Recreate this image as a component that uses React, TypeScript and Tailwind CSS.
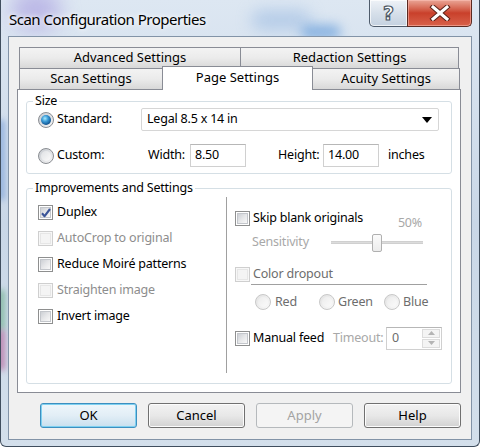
import React from "react";

function CheckBox({ checked = false, disabled = false }: { checked?: boolean; disabled?: boolean }) {
  return (
    <span
      className={`relative inline-flex w-[15px] h-[15px] shrink-0 border p-[1px] ${
        disabled ? "border-[#cfcfcf] bg-[#f7f7f7]" : "border-[#8e8f8f] bg-white"
      }`}
    >
      <span
        className={`block w-full h-full border ${
          disabled
            ? "border-[#e6e6e6] bg-[#f4f4f4]"
            : "border-[#c3c6cb] bg-gradient-to-br from-[#cdd0d5] via-[#e6e7e9] to-[#f8f8f8]"
        }`}
      />
      {checked && (
        <svg className="absolute left-[1px] top-[1px]" width="12" height="12" viewBox="0 0 12 12">
          <path d="M2 6.2 L4.6 9.2 L10 2" fill="none" stroke="#3b5598" strokeWidth="2.1" strokeLinejoin="round" />
        </svg>
      )}
    </span>
  );
}

function Radio({ checked = false, disabled = false }: { checked?: boolean; disabled?: boolean }) {
  return (
    <span
      className={`inline-flex w-[16px] h-[16px] shrink-0 rounded-full border items-center justify-center ${
        disabled
          ? "border-[#c8c8c8] bg-gradient-to-br from-[#e2e2e2] to-[#fafafa]"
          : "border-[#8a8d92] bg-gradient-to-br from-[#c6cad0] to-[#f6f6f6]"
      }`}
    >
      {checked ? (
        <span className="block w-[10px] h-[10px] rounded-full bg-[radial-gradient(circle_at_40%_35%,#a9ecff_0%,#3a9ad6_35%,#0e4f8c_75%,#0a3561_100%)]" />
      ) : (
        <span
          className={`block w-[10px] h-[10px] rounded-full ${
            disabled ? "bg-gradient-to-br from-[#ececec] to-[#fbfbfb]" : "bg-gradient-to-br from-[#dfe1e4] to-[#fbfbfb]"
          }`}
        />
      )}
    </span>
  );
}

function Tab({ label, w, selected = false, first = false }: { label: string; w: string; selected?: boolean; first?: boolean }) {
  if (selected) {
    return (
      <div
        className={`${w} h-[24px] -ml-px relative z-10 flex items-center justify-center border border-b-0 border-[#898c95] bg-white text-[13px] tracking-normal text-black pb-[1px]`}
      >
        {label}
      </div>
    );
  }
  return (
    <div
      className={`${w} h-[22px] ${first ? "" : "-ml-px"} flex items-center justify-center border border-[#898c95] bg-gradient-to-b from-[#f3f3f3] via-[#ebebeb] to-[#d8d8d8] text-[13px] tracking-normal text-black`}
    >
      {label}
    </div>
  );
}

function Button({ label, focused = false, disabled = false }: { label: string; focused?: boolean; disabled?: boolean }) {
  const cls = disabled
    ? "border-[#b5b9bc] bg-[#f4f4f4] text-[#a3a3a3]"
    : focused
    ? "border-[#3c8fc0] bg-gradient-to-b from-[#eef6fb] via-[#e2eef6] to-[#c8dfee] text-black shadow-[inset_0_0_0_1px_#7ed0f0]"
    : "border-[#707070] bg-gradient-to-b from-[#f2f2f2] via-[#e8e8e8] to-[#d2d2d2] text-black shadow-[inset_0_0_0_1px_#fcfcfc]";
  return (
    <div className={`w-[97px] h-[25px] rounded-[3px] border flex items-center justify-center text-[13px] tracking-normal ${cls}`}>
      {label}
    </div>
  );
}

export default function App() {
  return (
    <div className="w-[480px] h-[447px] relative overflow-hidden rounded-b-[6px] border-x border-b border-[#404e5e] bg-gradient-to-b from-[#dde7f2] via-[#c9d7e7] to-[#d3dfeb] flex flex-col font-['Noto_Sans',sans-serif] text-[12.5px] tracking-[-0.2px] text-black">
      {/* blurred desktop behind the glass */}
      <div className="absolute left-[10px] top-[-10px] w-[50px] h-[40px] rounded-full bg-[#a79be0] opacity-60 blur-[10px]" />
      <div className="absolute left-[250px] top-[10px] w-[60px] h-[20px] rounded-full bg-[#8fb3df] opacity-50 blur-[8px]" />
      <div className="absolute left-[300px] top-[25px] w-[40px] h-[14px] rounded-full bg-[#4f8fd6] opacity-60 blur-[6px]" />
      <div className="absolute left-[-4px] top-[120px] w-[8px] h-[80px] bg-[#7aa0d8] opacity-70 blur-[3px]" />
      <div className="absolute left-[-4px] top-[290px] w-[8px] h-[40px] bg-[#5aa57a] opacity-60 blur-[3px]" />
      <div className="absolute left-[-4px] top-[330px] w-[8px] h-[40px] bg-[#b04a8a] opacity-60 blur-[3px]" />

      {/* title bar */}
      <div className="relative h-[36px] flex items-start shrink-0">
        <div className="pl-[8px] pt-[9px] text-[15px] tracking-[-0.5px] leading-[20px] text-black [text-shadow:0_0_8px_#ffffff,0_0_4px_#ffffff]">
          Scan Configuration Properties
        </div>
        <div className="ml-auto mr-[7px] flex">
          <div className="w-[39px] h-[27px] rounded-bl-[5px] border border-t-0 border-[#4e5b6b] bg-gradient-to-b from-[#eef2f7] via-[#d7e0ea] to-[#c4d1e0] shadow-[inset_0_0_0_1px_rgba(255,255,255,0.7)] flex items-center justify-center">
            <span className="text-[19px] font-bold leading-none text-white [-webkit-text-stroke:1.2px_#4b5663] font-['DejaVu_Sans',sans-serif]">?</span>
          </div>
          <div className="w-[65px] h-[27px] -ml-px rounded-br-[5px] border border-t-0 border-[#5b2a22] bg-gradient-to-b from-[#e9a596] via-[#c9402b] to-[#d8614a] shadow-[inset_0_0_0_1px_rgba(255,200,190,0.5)] flex items-center justify-center">
            <svg width="22" height="16" viewBox="0 0 22 16">
              <path d="M4 2 L18 14 M18 2 L4 14" stroke="#5a2219" strokeWidth="5" strokeLinecap="square" />
              <path d="M4 2 L18 14 M18 2 L4 14" stroke="#ffffff" strokeWidth="3" strokeLinecap="square" />
            </svg>
          </div>
        </div>
      </div>

      {/* client area */}
      <div className="relative mx-[7px] h-[404px] border border-[#8293a7] bg-[#f0f0f0] flex flex-col">
        {/* tabs */}
        <div className="pt-[10px] pl-[10px] flex flex-col">
          <div className="flex">
            <Tab label="Advanced Settings" w="w-[222px]" first />
            <Tab label="Redaction Settings" w="w-[219px]" />
          </div>
          <div className="flex items-end h-[22px] -mt-px">
            <Tab label="Scan Settings" w="w-[144px]" first />
            <Tab label="Page Settings" w="w-[151px]" selected />
            <Tab label="Acuity Settings" w="w-[148px]" />
          </div>
        </div>

        {/* panel */}
        <div className="ml-[8px] -mt-px w-[444px] h-[304px] border border-[#898c95] bg-white flex flex-col">
          {/* Size group */}
          <fieldset className="mt-[4px] mx-[8px] border border-[#d5dfe5] rounded-[3px] pb-[6px]">
            <legend className="ml-[6px] px-[2px] leading-[14px]">Size</legend>
            <div className="flex items-center h-[23px] pl-[11px]">
              <div className="w-[103px] flex items-center gap-[3px]">
                <Radio checked />
                <span>Standard:</span>
              </div>
              <div className="w-[298px] h-[23px] rounded-[2px] border border-[#d6d6d6] bg-white flex items-center pl-[5px] pr-[6px]">
                <span>Legal 8.5 x 14 in</span>
                <svg className="ml-auto" width="10" height="6" viewBox="0 0 10 6">
                  <path d="M0 0 H10 L5 6 Z" fill="#000" />
                </svg>
              </div>
            </div>
            <div className="flex items-center h-[23px] mt-[13px] pl-[11px]">
              <div className="w-[110px] flex items-center gap-[3px]">
                <Radio />
                <span>Custom:</span>
              </div>
              <span className="w-[42px]">Width:</span>
              <div className="w-[56px] h-[23px] border border-[#d0d0d0] border-t-[#b7b7b7] bg-white flex items-center pl-[4px]">8.50</div>
              <span className="ml-[32px] w-[45px]">Height:</span>
              <div className="w-[56px] h-[23px] border border-[#d0d0d0] border-t-[#b7b7b7] bg-white flex items-center pl-[4px]">14.00</div>
              <span className="ml-[9px]">inches</span>
            </div>
          </fieldset>

          {/* Improvements group */}
          <fieldset className="mt-[7px] mx-[8px] h-[203px] border border-[#d5dfe5] rounded-[3px]">
            <legend className="ml-[6px] px-[2px] leading-[14px]">Improvements and Settings</legend>
            <div className="flex">
              {/* left column */}
              <div className="w-[199px] pt-[4px] pl-[11px] flex flex-col">
                <div className="h-[26px] flex items-center gap-[4px]">
                  <CheckBox checked />
                  <span>Duplex</span>
                </div>
                <div className="h-[26px] flex items-center gap-[4px] text-[#8d8d8d]">
                  <CheckBox disabled />
                  <span>AutoCrop to original</span>
                </div>
                <div className="h-[26px] flex items-center gap-[4px]">
                  <CheckBox />
                  <span>Reduce Moiré patterns</span>
                </div>
                <div className="h-[26px] flex items-center gap-[4px] text-[#8d8d8d]">
                  <CheckBox disabled />
                  <span>Straighten image</span>
                </div>
                <div className="h-[26px] flex items-center gap-[4px]">
                  <CheckBox />
                  <span>Invert image</span>
                </div>
              </div>
              {/* divider */}
              <div className="mt-[2px] w-px h-[176px] bg-[#a0a0a0]" />
              {/* right column */}
              <div className="pl-[8px] pt-[11px] flex flex-col w-[216px]">
                <div className="h-[24px] flex items-start">
                  <div className="h-[24px] flex items-center gap-[3px]">
                    <CheckBox />
                    <span>Skip blank originals</span>
                  </div>
                  <span className="ml-auto mr-[21px] mt-[10px] leading-[14px] text-[#a8a8a8]">50%</span>
                </div>
                <div className="mt-[2px] h-[20px] flex items-center">
                  <span className="ml-[17px] w-[79px] text-[#a8a8a8]">Sensitivity</span>
                  <div className="w-[92px] h-[20px] flex items-center">
                    <div className="w-[41px] h-[3px] bg-[#dcdcdc] border-y border-[#d0d0d0]" />
                    <div className="w-[10px] h-[18px] rounded-[2px] border border-[#b0b0b0] bg-gradient-to-b from-[#fbfbfb] to-[#ececec] mt-[2px]" />
                    <div className="w-[41px] h-[3px] bg-[#dcdcdc] border-y border-[#d0d0d0]" />
                  </div>
                </div>
                <div className="mt-[12px] h-[20px] flex items-center gap-[3px] text-[#6d6d6d]">
                  <CheckBox disabled />
                  <span>Color dropout</span>
                </div>
                <div className="ml-[16px] w-[176px] h-px bg-[#a0a0a0]" />
                <div className="mt-[7px] h-[20px] flex items-center text-[#6d6d6d]">
                  <div className="ml-[20px] w-[64px] flex items-center gap-[4px]">
                    <Radio disabled />
                    <span>Red</span>
                  </div>
                  <div className="w-[65px] flex items-center gap-[3px]">
                    <Radio disabled />
                    <span>Green</span>
                  </div>
                  <div className="flex items-center gap-[3px]">
                    <Radio disabled />
                    <span>Blue</span>
                  </div>
                </div>
                <div className="mt-[14px] h-[24px] flex items-center">
                  <div className="w-[98px] flex items-center gap-[3px]">
                    <CheckBox />
                    <span>Manual feed</span>
                  </div>
                  <span className="w-[53px] text-[#a8a8a8]">Timeout:</span>
                  <div className="w-[56px] h-[23px] border border-[#d0d0d0] border-t-[#b7b7b7] bg-white flex items-center">
                    <span className="pl-[5px] text-[#6d6d6d]">0</span>
                    <div className="ml-auto w-[20px] h-full p-[1px] flex flex-col gap-[1px]">
                      <div className="flex-1 border border-[#dcdcdc] bg-[#f4f4f4] flex items-center justify-center">
                        <svg width="7" height="4" viewBox="0 0 7 4"><path d="M0 4 L3.5 0 L7 4 Z" fill="#b4b4b4" /></svg>
                      </div>
                      <div className="flex-1 border border-[#dcdcdc] bg-[#f4f4f4] flex items-center justify-center">
                        <svg width="7" height="4" viewBox="0 0 7 4"><path d="M0 0 L7 0 L3.5 4 Z" fill="#b4b4b4" /></svg>
                      </div>
                    </div>
                  </div>
                </div>
              </div>
            </div>
          </fieldset>
        </div>

        {/* buttons */}
        <div className="mt-[10px] pl-[31px] flex gap-[11px]">
          <Button label="OK" focused />
          <Button label="Cancel" />
          <Button label="Apply" disabled />
          <Button label="Help" />
        </div>
      </div>
    </div>
  );
}
